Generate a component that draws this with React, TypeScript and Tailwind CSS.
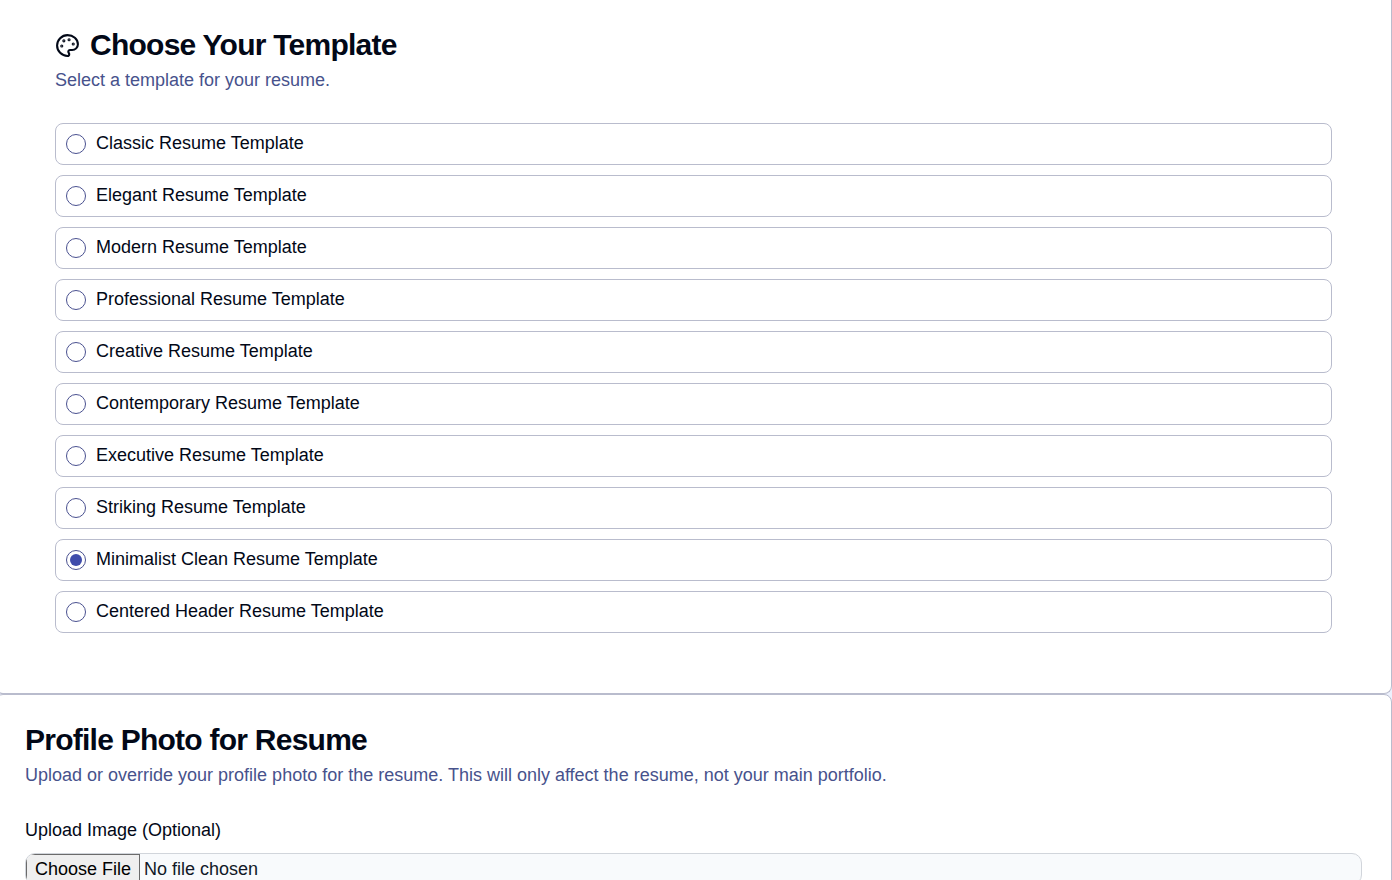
import { useState } from 'react';

const templates = [
  { id: 'classic', name: 'Classic Resume Template' },
  { id: 'elegant', name: 'Elegant Resume Template' },
  { id: 'modern', name: 'Modern Resume Template' },
  { id: 'professional', name: 'Professional Resume Template' },
  { id: 'creative', name: 'Creative Resume Template' },
  { id: 'contemporary', name: 'Contemporary Resume Template' },
  { id: 'executive', name: 'Executive Resume Template' },
  { id: 'striking', name: 'Striking Resume Template' },
  { id: 'minimalist', name: 'Minimalist Clean Resume Template' },
  { id: 'centered', name: 'Centered Header Resume Template' },
];

const PaletteIcon = () => (
  <svg
    aria-hidden="true"
    className="size-[25px] shrink-0"
    fill="none"
    stroke="currentColor"
    strokeLinecap="round"
    strokeLinejoin="round"
    strokeWidth="2"
    viewBox="0 0 24 24"
  >
    <circle cx="13.5" cy="6.5" fill="currentColor" r=".5" />
    <circle cx="17.5" cy="10.5" fill="currentColor" r=".5" />
    <circle cx="8.5" cy="7.5" fill="currentColor" r=".5" />
    <circle cx="6.5" cy="12.5" fill="currentColor" r=".5" />
    <path d="M12 2C6.5 2 2 6.5 2 12s4.5 10 10 10c.926 0 1.648-.746 1.648-1.688 0-.437-.18-.835-.437-1.125-.29-.289-.438-.652-.438-1.125a1.64 1.64 0 0 1 1.668-1.668h1.996c3.051 0 5.555-2.503 5.555-5.554C21.965 6.012 17.461 2 12 2z" />
  </svg>
);

const TemplateSection = () => {
  const [selected, setSelected] = useState('minimalist');

  return (
    <section className="rounded-b-lg border border-t-0 border-[#b9bccd] bg-white px-[59px] pt-[27px] pb-[60px]">
      <h2 className="flex items-center gap-2.5 text-[30px] leading-9 font-bold tracking-tight">
        <PaletteIcon />
        Choose Your Template
      </h2>
      <p className="mt-[5px] text-lg leading-6 text-[#47528c]">Select a template for your resume.</p>

      <div aria-label="Resume template" className="mt-[31px] flex flex-col gap-2.5" role="radiogroup">
        {templates.map((template) => (
          <label
            className="flex h-[42px] cursor-pointer items-center gap-2.5 rounded-lg border border-[#b9bccd] px-2.5"
            key={template.id}
          >
            <input
              checked={selected === template.id}
              className="grid size-5 shrink-0 appearance-none place-items-center rounded-full border border-[#4a5190] before:size-3 before:rounded-full checked:before:bg-[#3f4cab]"
              name="template"
              onChange={() => setSelected(template.id)}
              type="radio"
              value={template.id}
            />
            <span className="pb-0.5 text-lg leading-6">{template.name}</span>
          </label>
        ))}
      </div>
    </section>
  );
};

const PhotoSection = () => (
  <section className="rounded-lg border border-[#b9bccd] bg-white px-[29px] pt-[27px] pb-[60px]">
    <h2 className="text-[30px] leading-9 font-bold tracking-tight">Profile Photo for Resume</h2>
    <p className="mt-[5px] text-lg leading-6 text-[#47528c]">
      Upload or override your profile photo for the resume. This will only affect the resume, not
      your main portfolio.
    </p>

    <label className="mt-[31px] block text-lg leading-6" htmlFor="photo">
      Upload Image (Optional)
    </label>
    <input
      accept="image/*"
      className="mt-[11px] block w-full overflow-hidden rounded-[10px] border border-[#d1d5db] bg-[#f8fafc] text-lg leading-7 text-[#111827] file:mr-1 file:border file:border-[#6b6b6b] file:bg-[#efefef] file:px-2 file:text-black"
      id="photo"
      type="file"
    />
  </section>
);

export default function App() {
  return (
    <main className="h-screen overflow-hidden bg-[#edf1fd] font-['Liberation_Sans',Arial,sans-serif] text-[#020817]">
      <div className="-ml-[5px]">
        <TemplateSection />
        <PhotoSection />
      </div>
    </main>
  );
}
